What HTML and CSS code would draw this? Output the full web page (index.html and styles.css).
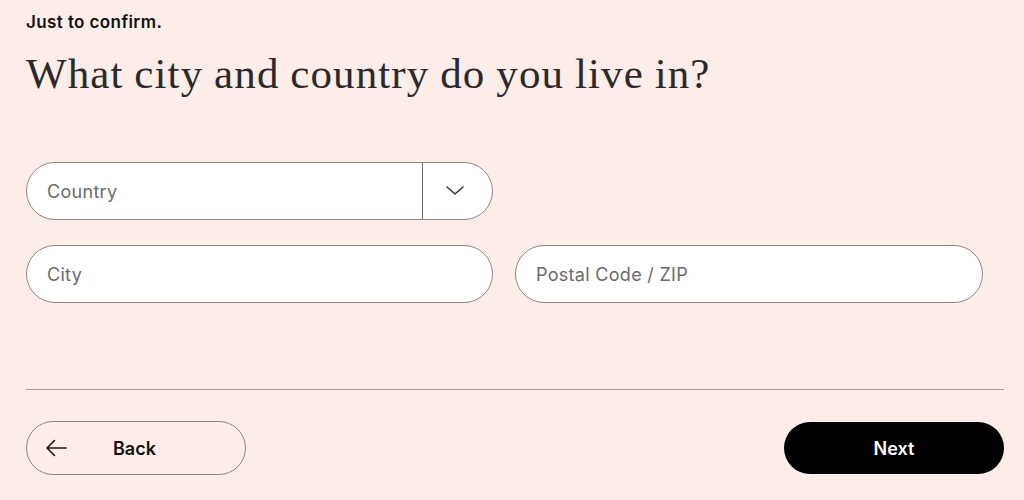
FILE: index.html
```html
<!DOCTYPE html>
<html>
<head>
<meta charset="utf-8">
<link rel="stylesheet" href="styles.css">
</head>
<body>
<main class="page">
  <p class="eyebrow">Just to confirm.</p>
  <h1 class="title">What city and country do you live in?</h1>
  <div class="form">
    <div class="row">
      <div class="field select">
        <span class="placeholder">Country</span>
        <span class="select-btn">
          <svg width="20" height="12" viewBox="0 0 20 12"><path d="M2 2l8 7 8-7" fill="none" stroke="#3a3a3a" stroke-width="1.6" stroke-linecap="round" stroke-linejoin="round"/></svg>
        </span>
      </div>
      <div></div>
    </div>
    <div class="row">
      <div class="field"><span class="placeholder">City</span></div>
      <div class="field"><span class="placeholder">Postal Code / ZIP</span></div>
    </div>
  </div>
  <hr class="divider">
  <div class="actions">
    <button class="btn back">
      <svg class="arrow" width="22" height="18" viewBox="0 0 22 18"><path d="M21 9H2M9.5 1.5L2 9l7.5 7.5" fill="none" stroke="#1a1a1a" stroke-width="1.6" stroke-linecap="round" stroke-linejoin="round"/></svg>
      <span>Back</span>
    </button>
    <button class="btn next">Next</button>
  </div>
</main>
</body>
</html>
```
FILE: styles.css
```css
* { box-sizing: border-box; }
html, body { margin: 0; padding: 0; }
body {
  background: #fcede8;
  font-family: "Inter", "Liberation Sans", sans-serif;
  color: #111;
}
.page {
  padding: 12px 20px 0 26px;
}
.eyebrow {
  margin: 0;
  font-size: 17px;
  font-weight: 600;
  line-height: 20px;
  letter-spacing: 0.4px;
  color: #111;
}
.title {
  margin: 18px 0 0;
  font-family: "Liberation Serif", serif;
  font-weight: 400;
  font-size: 43px;
  line-height: 48px;
  color: #2a2a2a;
  letter-spacing: 1.1px;
  word-spacing: -1px;
}
.form {
  margin-top: 64px;
  width: 957px;
  display: flex;
  flex-direction: column;
  gap: 25px;
}
.row {
  display: grid;
  grid-template-columns: 467px 468px;
  gap: 22px;
}
.field {
  height: 58px;
  border: 1.5px solid #8e8682;
  border-radius: 29px;
  background: #fff;
  display: flex;
  align-items: center;
  padding-left: 20px;
  overflow: hidden;
}
.placeholder {
  font-size: 18px;
  letter-spacing: 0.3px;
  color: #6b6b6b;
}
.select .placeholder { flex: 1; }
.select-btn {
  width: 70px;
  height: 100%;
  border-left: 1.5px solid #6e6866;
  display: flex;
  align-items: center;
  justify-content: center;
  padding-right: 6px;
}
.divider {
  margin: 86px 0 0;
  border: 0;
  border-top: 1.5px solid #a89a96;
}
.actions {
  margin-top: 31px;
  display: flex;
  justify-content: space-between;
  align-items: center;
}
.btn {
  height: 54px;
  width: 220px;
  border-radius: 27px;
  font-family: "Inter", "Liberation Sans", sans-serif;
  font-size: 18px;
  font-weight: 600;
  cursor: pointer;
}
.back {
  background: transparent;
  border: 1.5px solid #8e8682;
  color: #111;
  display: flex;
  align-items: center;
  padding: 0 0 0 18px;
}
.back span { margin-left: 46px; }
.next {
  background: #000;
  color: #fff;
  border: 0;
  height: 52px;
}
```
